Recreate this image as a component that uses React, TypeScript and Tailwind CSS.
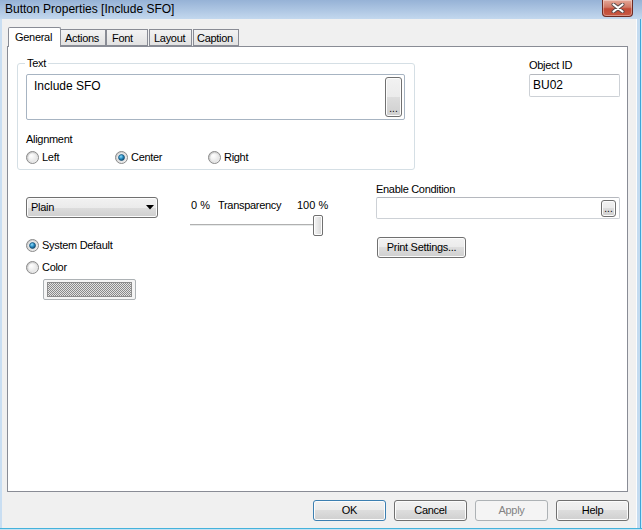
import React, { useId } from "react";

const Radio = ({ checked }: { checked?: boolean }) => {
  const id = useId().replace(/:/g, "");
  return (
    <svg width="13" height="13" viewBox="0 0 13 13" className="shrink-0">
      <defs>
        <linearGradient id={`o${id}`} x1="0" y1="0" x2="1" y2="1">
          <stop offset="0" stopColor="#c4c4c4" />
          <stop offset="1" stopColor="#f7f7f7" />
        </linearGradient>
        <radialGradient id={`i${id}`} cx="0.35" cy="0.3" r="0.8">
          <stop offset="0" stopColor="#ffffff" />
          <stop offset="1" stopColor="#e4e4e4" />
        </radialGradient>
        <radialGradient id={`d${id}`} cx="0.4" cy="0.35" r="0.7">
          <stop offset="0" stopColor="#8fdcfb" />
          <stop offset="0.5" stopColor="#2a8ec4" />
          <stop offset="1" stopColor="#0c3f63" />
        </radialGradient>
      </defs>
      <circle cx="6.5" cy="6.5" r="6" fill={`url(#o${id})`} stroke="#8a8a8a" strokeWidth="1" />
      <circle cx="6.5" cy="6.5" r="4.2" fill={`url(#i${id})`} />
      {checked && <circle cx="6.5" cy="6.5" r="3" fill={`url(#d${id})`} stroke="#164f74" strokeWidth="0.7" />}
    </svg>
  );
};

const btnBase =
  "flex items-center border rounded-[3px] bg-[image:linear-gradient(#f2f2f2,#ebebeb_50%,#dddddd_50%,#cfcfcf)] shadow-[inset_0_0_0_1px_#fcfcfc]";
const btn = `${btnBase} justify-center`;

const DotsButton = ({ className }: { className: string }) => (
  <div className={`flex justify-center items-end border rounded-[3px] bg-[image:linear-gradient(#f2f2f2,#ebebeb_50%,#dddddd_50%,#cfcfcf)] shadow-[inset_0_0_0_1px_#fcfcfc] border-[#707070] ${className} pb-[2px] leading-none text-[10px] tracking-normal`}>...</div>
);

export default function App() {
  return (
    <div className="w-[642px] h-[530px] flex flex-col bg-[#f0f0f0] font-['Liberation_Sans',Arial,sans-serif] text-[11px] tracking-[-0.3px] text-black overflow-hidden">
      {/* Title bar */}
      <div className="h-[19px] shrink-0 flex items-start bg-linear-to-b from-[#96b2d6] to-[#c3d8ee]">
        <div className="pl-[5px] pt-[2px] text-[12px] tracking-normal leading-[15px] flex-1">Button Properties [Include SFO]</div>
        <div className="mr-[9px] w-[31px] h-[17px] rounded-b-[4px] border border-t-0 border-[#6e2a22] bg-[image:linear-gradient(#e5a898,#d07865_45%,#c24a36_55%,#c85a44)] flex items-center justify-center shadow-[inset_0_0_0_1px_rgba(255,255,255,0.35)]">
          <svg width="14" height="10" viewBox="0 0 14 10">
            <path d="M2.5 1.5 L11.5 8.5 M11.5 1.5 L2.5 8.5" stroke="#5a4a4a" strokeWidth="4" strokeLinecap="round" />
            <path d="M2.5 1.5 L11.5 8.5 M11.5 1.5 L2.5 8.5" stroke="#ffffff" strokeWidth="2.2" strokeLinecap="round" />
          </svg>
        </div>
      </div>

      {/* Middle: frame + body */}
      <div className="flex-1 flex min-h-0">
        <div className="w-[2px] bg-[#c9def2] shrink-0" />
        <div className="flex-1 flex flex-col min-w-0">
          {/* Tabs + panel */}
          <div className="flex-1 flex flex-col pl-[5px] pr-[8px] pt-[8px] min-h-0">
            <div className="flex items-end h-[19px] shrink-0 pl-[1px]">
              <div className="relative z-10 -mb-px h-[20px] w-[53px] bg-white border border-b-0 border-[#898c95] rounded-t-[2px] pl-[6px] pt-[3px] leading-[13px]">General</div>
              <div className="h-[17px] w-[45px] border border-l-0 border-[#898c95] bg-linear-to-b from-[#f3f3f3] to-[#e2e2e2] pl-[4px] pt-[2px] leading-[13px]">Actions</div>
              <div className="h-[17px] w-[42px] border border-[#898c95] bg-linear-to-b from-[#f3f3f3] to-[#e2e2e2] pl-[5px] pt-[2px] leading-[13px]">Font</div>
              <div className="ml-[1px] h-[17px] w-[43px] border border-[#898c95] bg-linear-to-b from-[#f3f3f3] to-[#e2e2e2] pl-[4px] pt-[2px] leading-[13px]">Layout</div>
              <div className="ml-[1px] h-[17px] w-[46px] border border-[#898c95] bg-linear-to-b from-[#f3f3f3] to-[#e2e2e2] pl-[3px] pt-[2px] leading-[13px]">Caption</div>
            </div>
            <div className="flex-1 bg-white border border-[#898c95] flex flex-col">
              {/* Row 1 */}
              <div className="flex items-start">
                <fieldset className="ml-[9px] mt-[10px] w-[398px] border border-[#d5dfe5] rounded-[3px] pl-[8px] pr-[9px] pb-[5px]">
                  <legend className="-ml-[1px] px-[2px] leading-[13px]">Text</legend>
                  <div className="mt-[4px] h-[46px] border border-[#a7b4c2] rounded-[2px] flex justify-between">
                    <div className="pl-[7px] pt-[4px] text-[12px] tracking-normal leading-[14px]">Include SFO</div>
                    <DotsButton className="mt-[2px] mr-[2px] w-[17px] h-[40px]" />
                  </div>
                  <div className="mt-[13px] leading-[13px]">Alignment</div>
                  <div className="mt-[5px] flex items-center leading-[13px]">
                    <div className="w-[89px] flex items-center gap-[3px]"><Radio />Left</div>
                    <div className="w-[93px] flex items-center gap-[3px]"><Radio checked />Center</div>
                    <div className="flex items-center gap-[3px]"><Radio />Right</div>
                  </div>
                </fieldset>
                <div className="ml-[114px] mt-[12px] flex flex-col">
                  <div className="leading-[13px]">Object ID</div>
                  <div className="mt-[2px] w-[91px] h-[23px] border border-[#cdd1d6] border-t-[#b5b8be] rounded-[2px] pl-[3px] pt-[3px] text-[12px] tracking-normal leading-[14px]">BU02</div>
                </div>
              </div>

              {/* Row 2 */}
              <div className="mt-[13px] flex items-start">
                <div className="ml-[18px] w-[132px] shrink-0 flex flex-col">
                  <div className={`${btnBase} justify-between border-[#707070] mt-[14px] h-[21px] pl-[4px] pr-[3px]`}>
                    <span>Plain</span>
                    <svg width="8" height="5" viewBox="0 0 8 5"><path d="M0 0 H8 L4 4.5 Z" fill="#000" /></svg>
                  </div>
                  <div className="mt-[21px] flex items-center gap-[3px] leading-[13px]"><Radio checked />System Default</div>
                  <div className="mt-[9px] flex items-center gap-[3px] leading-[13px]"><Radio />Color</div>
                  <div className="ml-[17px] mt-[5px] w-[93px] h-[21px] border border-[#adb2b5] rounded-[2px] bg-[#f5f5f5] py-[2px] px-[3px]">
                    <div className="w-full h-full border border-[#8c8c8c] bg-[image:repeating-conic-gradient(#8a8a8a_0_25%,#e2e2e2_0_50%)] bg-[length:2px_2px]" />
                  </div>
                </div>
                <div className="ml-[32px] w-[133px] shrink-0 flex flex-col">
                  <div className="mt-[16px] flex leading-[13px] whitespace-nowrap">
                    <span className="shrink-0 ml-[1px] w-[27px] tracking-normal">0 %</span>
                    <span className="shrink-0 w-[79px]">Transparency</span>
                    <span className="shrink-0 tracking-normal">100 %</span>
                  </div>
                  <div className="mt-[3px] h-[21px] flex items-center">
                    <div className="flex-1 h-[3px] border-t border-[#b0b0b0] border-b border-b-white bg-[#e7eaea]" />
                    <div className="-ml-[1px] w-[10px] h-[21px] border border-[#707070] rounded-[2px] bg-[image:linear-gradient(to_right,#f6f6f6,#e6e6e6_50%,#d6d6d6)] shadow-[inset_0_0_0_1px_#fdfdfd]" />
                  </div>
                </div>
                <div className="ml-[53px] w-[244px] shrink-0 flex flex-col">
                  <div className="leading-[13px]">Enable Condition</div>
                  <div className="mt-[1px] h-[22px] border border-[#cdd1d6] border-t-[#b5b8be] rounded-[2px] flex justify-end items-start pt-[2px] pr-[3px]">
                    <DotsButton className="w-[15px] h-[17px]" />
                  </div>
                  <div className={`${btn} border-[#707070] ml-[1px] mt-[18px] w-[89px] h-[21px]`}>Print Settings...</div>
                </div>
              </div>
            </div>
          </div>

          {/* Footer buttons */}
          <div className="shrink-0 flex justify-end gap-[8px] pt-[8px] pb-[7px] pr-[7px]">
            <div className={`${btnBase} justify-center w-[73px] h-[21px] border-[#3c7fb1] shadow-[inset_0_0_0_1px_#aee4f8]`}>OK</div>
            <div className={`${btn} w-[73px] h-[21px] border-[#707070]`}>Cancel</div>
            <div className="flex items-center justify-center w-[73px] h-[21px] border border-[#adb2b5] rounded-[3px] bg-[#f4f4f4] text-[#838383]">Apply</div>
            <div className={`${btn} w-[73px] h-[21px] border-[#707070]`}>Help</div>
          </div>
        </div>
        <div className="w-[6px] shrink-0 flex">
          <div className="w-[1px] bg-[#fbfcfd]" />
          <div className="w-[3px] bg-[#c4dbf0]" />
          <div className="w-[1px] bg-[#3ea5d8]" />
          <div className="w-[1px] bg-[#d3e6f5]" />
        </div>
      </div>
      <div className="h-[1px] shrink-0 bg-[#45b3dc]" />
      <div className="h-[1px] shrink-0 bg-[#c5e1f2]" />
    </div>
  );
}
